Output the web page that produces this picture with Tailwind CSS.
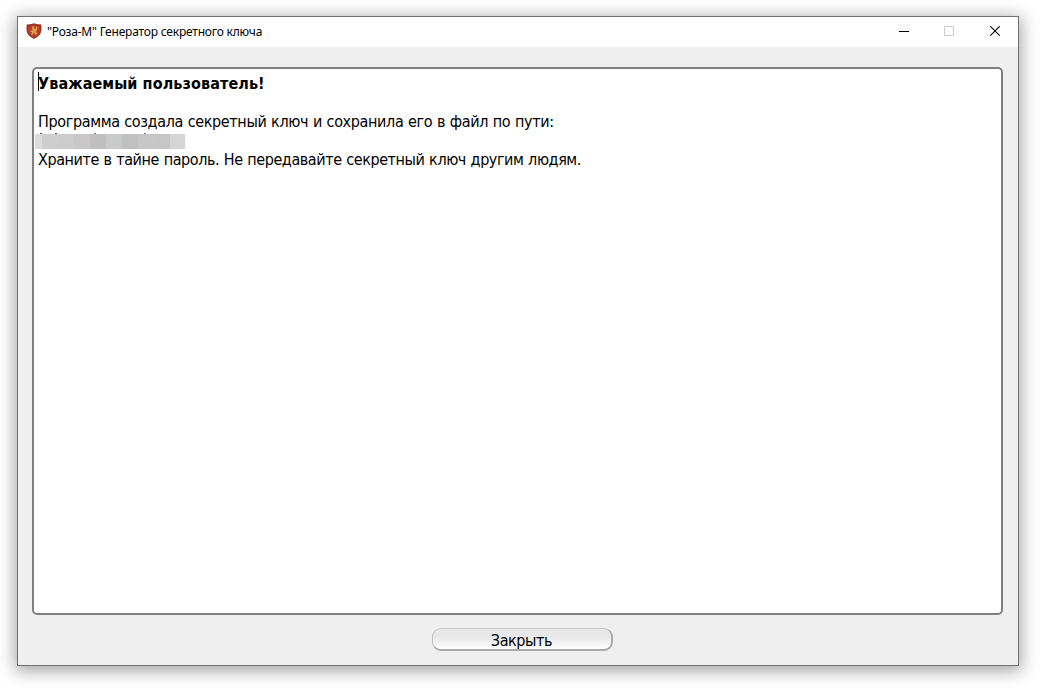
<!DOCTYPE html>
<html lang="ru">
<head>
<meta charset="utf-8">
<title>Генератор секретного ключа</title>
<script src="https://cdn.jsdelivr.net/npm/@tailwindcss/browser@4"></script>
</head>
<body class="h-[688px] w-[1040px] overflow-hidden bg-white pt-4 pl-[17px] text-black">
<main class="flex h-[650px] w-[1002px] flex-col border border-[#707070] bg-[#efefef] shadow-[0_3px_16px_2px_rgba(0,0,0,0.36)]">
  <header class="flex h-[30px] shrink-0 items-center bg-white pl-2">
    <svg class="mb-[2px] h-4 w-4" viewBox="0 0 16 16">
      <path d="M8 .2 10.500 1 15.300 1.600C16 7 16 13 8 15.900 0 13 0 7 .7 1.600L5.500 1Z" fill="#a93a2c"/>
      <path d="M8 1.600 10.500 2.300 14.200 2.700C14.600 7.500 14.500 12 8 14.600 1.500 12 1.400 7.500 1.800 2.700L5.500 2.300Z" fill="#b9402b" stroke="#8e3026" stroke-width=".6"/>
      <path d="M6 3.200 8.500 3.400 8.300 5.800 9.500 6.200 10.200 3.500 11.500 4.300 10.800 7.500 9.800 8.800 11.300 10.800 10 12.200 8.700 10 7.300 10.500 6.300 12.200 5 11.300 6.300 9.300 4.500 8.800 4.500 7.700 6.500 7.500Z" fill="#e0a050"/>
    </svg>
    <h1 class="ml-[5px] font-['Noto_Sans',sans-serif] text-[12px] leading-4 tracking-[-0.2px] whitespace-nowrap">"Роза-М" Генератор секретного ключа</h1>
    <div class="ml-auto flex h-full">
      <button class="flex w-[45px] items-center justify-center pb-px pl-[2px]" aria-label="Свернуть"><svg class="h-[11px] w-[11px]" viewBox="0 0 11 11"><path d="M0 5.500H10" stroke="#000"/></svg></button>
      <button class="flex w-[46px] items-center justify-center pb-px" aria-label="Развернуть"><svg class="h-[11px] w-[11px]" viewBox="0 0 11 11"><path d="M.5 .5H9.500V9.500H.5Z" fill="none" stroke="#ccc"/></svg></button>
      <button class="flex w-[46px] items-center justify-center pb-[2px]" aria-label="Закрыть окно"><svg class="h-[11px] w-[11px]" viewBox="0 0 11 11"><path d="M.3 .3 9.700 9.700M9.700 .3 .3 9.700" stroke="#000" stroke-width="1.100"/></svg></button>
    </div>
  </header>
  <section class="mr-[15px] ml-[14px] mt-5 h-[548px] shrink-0 rounded-[5px] border-2 border-[#808080] bg-white pt-[5px] pl-1 font-['DejaVu_Sans_Condensed','DejaVu_Sans',sans-serif] text-[16px] leading-[19px] whitespace-nowrap">
    <p class="relative h-[19px] font-bold tracking-[0.1px]"><span class="absolute top-[-2px] left-0 h-[19px] w-px bg-black"></span>Уважаемый пользователь!</p>
    <p class="mt-[19px] h-[19px] tracking-[-0.36px] [word-spacing:0.5px]">Программа создала секретный ключ и сохранила его в файл по пути:</p>
    <div class="-ml-[3px] h-[19px] pt-[3px]">
      <div class="relative flex h-[15px] w-[155px]">
        <span class="absolute -top-px left-[5px] h-px w-[2px] bg-[#555]"></span><span class="absolute -top-px left-[20px] h-px w-[2px] bg-[#555]"></span><span class="absolute -top-px left-[59px] h-px w-[2px] bg-[#777]"></span><span class="absolute -top-px left-[109px] h-px w-[2px] bg-[#777]"></span>
        <i class="w-[7px] bg-[#dcdcdc]"></i><i class="w-4 bg-[#cfcecf]"></i><i class="w-4 bg-[#cdcccd]"></i><i class="w-4 bg-[#c9c7c8]"></i><i class="w-4 bg-[#c0bebf]"></i><i class="w-4 bg-[#c9cbca]"></i><i class="w-4 bg-[#c1c0c1]"></i><i class="w-4 bg-[#c8c7c8]"></i><i class="w-4 bg-[#c7c6c7]"></i><i class="w-[15px] bg-[#d5d5d6]"></i><i class="w-[5px] bg-[#fbfbfc]"></i>
      </div>
    </div>
    <p class="h-[19px] tracking-[-0.42px] [word-spacing:0.5px]">Храните в тайне пароль. Не передавайте секретный ключ другим людям.</p>
  </section>
  <button class="mt-[13px] ml-[414px] flex h-[23px] w-[181px] items-center justify-center rounded-[9px] border border-r-2 border-b-2 border-t-[#c8c8c8] border-r-[#aaa] border-b-[#aaa] border-l-[#c0c0c0] bg-linear-to-b from-[#e6e6e6] via-[#ebebeb] to-white pt-[2px] pr-px font-['DejaVu_Sans_Condensed','DejaVu_Sans',sans-serif] text-[16px] leading-[19px] tracking-[-0.4px]">Закрыть</button>
</main>
</body>
</html>
